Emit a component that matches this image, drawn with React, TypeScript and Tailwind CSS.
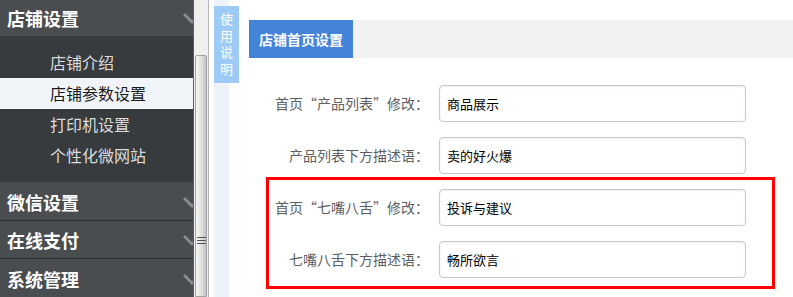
import React from "react";

const font = { fontFamily: '"Noto Sans CJK SC", "Noto Sans", sans-serif' };

function Chevron() {
  return (
    <svg width="10" height="14" viewBox="0 0 10 14" className="ml-auto shrink-0">
      <path d="M1 3 L9 11 L17 3" fill="none" stroke="#8a8c8e" strokeWidth="2.8" />
    </svg>
  );
}

function Header({ label, border }: { label: string; border?: boolean }) {
  return (
    <div
      className={
        "flex items-center pl-[7px] pt-[2px] bg-[#4a4d50] text-white font-bold text-[18px] " +
        (border ? "h-[40px] border-t border-[#2c2e30]" : "h-[39px]")
      }
    >
      <span className="leading-none">{label}</span>
      <Chevron />
    </div>
  );
}

const subItems = ["店铺介绍", "店铺参数设置", "打印机设置", "个性化微网站"];

const rows = [
  { label: "首页“产品列表”修改：", value: "商品展示" },
  { label: "产品列表下方描述语：", value: "卖的好火爆" },
  { label: "首页“七嘴八舌”修改：", value: "投诉与建议" },
  { label: "七嘴八舌下方描述语：", value: "畅所欲言" },
];

export default function App() {
  return (
    <div className="w-[793px] h-[297px] overflow-hidden flex bg-white" style={font}>
      {/* Sidebar */}
      <div className="w-[193px] shrink-0 flex flex-col bg-[#383b3d]">
        <div className="flex items-center h-[37px] pl-[7px] pt-[1px] bg-[#4a4d50] text-white font-bold text-[18px]">
          <span className="leading-none">店铺设置</span>
          <Chevron />
        </div>
        <div className="bg-[#383b3d] pt-[11px] pb-[11px] flex flex-col">
          {subItems.map((s, i) => (
            <div
              key={s}
              className={
                "h-[31px] flex items-center pl-[50px] text-[16px] " +
                (i === 1 ? "bg-[#f1f4f8] text-[#1a1a1a]" : "text-[#dcdcdc]")
              }
            >
              {s}
            </div>
          ))}
        </div>
        <Header label="微信设置" />
        <Header label="在线支付" border />
        <Header label="系统管理" border />
      </div>

      {/* Scrollbar */}
      <div className="w-[16px] shrink-0 border-l border-[#5a5c5e] bg-[#efefef] flex flex-col pt-[55px] border-r border-r-[#b5b5b5]">
        <div className="flex-1 mx-[1px] rounded-t-[2px] border border-[#a3a3a3] bg-[linear-gradient(to_right,#f6f6f6,#e2e2e2_50%,#c4c4c4)] flex flex-col items-center pt-[181px]">
          <div className="w-[9px] flex flex-col gap-[2px]">
            <div className="h-[1px] bg-[#555]" />
            <div className="h-[1px] bg-[#555]" />
            <div className="h-[1px] bg-[#555]" />
          </div>
        </div>
      </div>

      {/* gap */}
      <div className="w-[5px] shrink-0 bg-white" />

      {/* help column */}
      <div className="w-[15px] shrink-0 bg-[#eef3f9] flex flex-col pt-[6px]">
        <div className="w-[25px] h-[77px] bg-[#9ecbf5] flex justify-center pt-[5px] relative z-10">
          <p className="w-[13px] break-all text-white text-[13px] leading-[16.5px]">使用说明</p>
        </div>
      </div>

      <div className="w-[20px] shrink-0 bg-white" />

      {/* Main */}
      <div className="flex-1 flex flex-col pt-[20px] relative">
        <div className="h-[38px] bg-[#f2f2f2] flex">
          <div className="w-[104px] bg-[#4384d8] text-white font-bold text-[14px] flex items-center justify-center">
            店铺首页设置
          </div>
        </div>
        <div className="flex flex-col gap-[15px] pt-[27px]">
          {rows.map((r) => (
            <div key={r.label} className="flex items-center">
              <div className="w-[180px] text-right text-[14px] text-[#5e5e5e] whitespace-nowrap">{r.label}</div>
              <div className="ml-[10px] w-[307px] h-[37px] rounded-[4px] border border-[#c8c8c8] shadow-[inset_0_1px_2px_rgba(0,0,0,0.08)] flex items-center pl-[7px] text-[13px] text-black">
                {r.value}
              </div>
            </div>
          ))}
        </div>
        {/* red annotation box */}
        <div className="absolute left-[17px] top-[177px] w-[509px] h-[112px] border-[3px] border-[#ff0000] pointer-events-none" />
      </div>
    </div>
  );
}
